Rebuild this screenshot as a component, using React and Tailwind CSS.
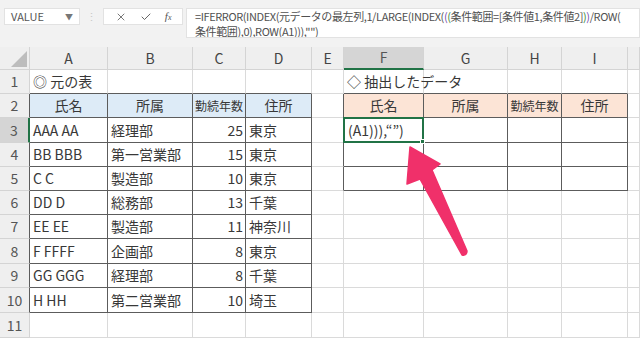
import { X, Check } from "lucide-react";

const colW = ["w-[78px]", "w-[85px]", "w-[53px]", "w-[66px]", "w-[32px]", "w-[80px]", "w-[84px]", "w-[54px]", "w-[66px]", "flex-1"];
const letters = ["A", "B", "C", "D", "E", "F", "G", "H", "I", ""];
const rowH = ["h-[24px]", "h-[24px]", "h-[25px]", "h-[24px]", "h-[24px]", "h-[24px]", "h-[24px]", "h-[25px]", "h-[24px]", "h-[25px]", "h-[25px]"];

const staff = [
  ["AAA AA", "経理部", "25", "東京"],
  ["BB BBB", "第一営業部", "15", "東京"],
  ["C C", "製造部", "10", "東京"],
  ["DD D", "総務部", "13", "千葉"],
  ["EE EE", "製造部", "11", "神奈川"],
  ["F FFFF", "企画部", "8", "東京"],
  ["GG GGG", "経理部", "8", "千葉"],
  ["H HH", "第二営業部", "10", "埼玉"],
];
const heads = ["氏名", "所属", "勤続年数", "住所"];

function cellText(r, c) {
  if (r === 1 && c === 0) return "◎ 元の表";
  if (r === 1 && c === 5) return "◇ 抽出したデータ";
  if (r === 2 && c <= 3) return heads[c];
  if (r === 2 && c >= 5 && c <= 8) return heads[c - 5];
  if (r >= 3 && r <= 10 && c <= 3) return staff[r - 3][c];
  return "";
}

function Cell({ r, c }) {
  const inLeft = r >= 2 && r <= 10 && c <= 3;
  const inRight = r >= 2 && r <= 5 && c >= 5 && c <= 8;
  const darkR = inLeft || inRight || (c === 4 && r >= 2 && r <= 5);
  const darkB = inLeft || inRight || (r === 1 && (c <= 3 || (c >= 5 && c <= 8)));
  const head = r === 2 && (inLeft || inRight);
  const text = cellText(r, c);
  const num = c === 2 && r >= 3;
  const small = head && (c === 2 || c === 7);
  const selected = r === 3 && c === 5;
  return (
    <div
      className={`relative shrink-0 ${colW[c]} border-r border-b ${darkR ? "border-r-[#5c5c5c]" : "border-r-[#dadada]"} ${darkB ? "border-b-[#5c5c5c]" : "border-b-[#dadada]"} ${head ? (inLeft ? "bg-[#ddebf7]" : "bg-[#fce4d6]") : "bg-white"} flex items-center ${head ? "justify-center" : num ? "justify-end pr-[2px]" : "pl-[3px]"} ${small ? "text-[12px]" : "text-[14px]"} whitespace-nowrap overflow-visible`}
    >
      <span className="relative z-10">{text}</span>
      {selected && (
        <div className="absolute -left-px -top-px -right-px -bottom-px border-2 border-[#217346] z-20 flex items-center pl-[3px] text-[14px] bg-white">
          <span>(A1))),“”)</span>
          <div className="absolute -right-[3px] -bottom-[3px] w-[5px] h-[5px] bg-[#217346] border border-white"></div>
        </div>
      )}
    </div>
  );
}

export default function App() {
  return (
    <div className="relative w-[640px] h-[338px] overflow-hidden bg-white text-[#383838] font-['Noto_Sans_CJK_JP',sans-serif]">
      {/* formula bar */}
      <div className="h-[47px] bg-[#f2f2f2] flex items-start pt-[8px] pl-[4px]">
        <div className="w-[76px] h-[17px] bg-white border border-[#e2e2e2] flex items-center justify-between px-[6px] text-[11px] text-[#555]">
          <span>VALUE</span>
          <span className="text-[8px] text-[#777]">▼</span>
        </div>
        <div className="w-[23px] h-[17px] flex items-center justify-center text-[11px] text-[#c8c8c8]">⋮</div>
        <div className="w-[80px] h-[17px] bg-white border border-[#e2e2e2] flex items-center justify-around px-[4px] text-[#555]">
          <X size={12} strokeWidth={1.6} />
          <Check size={12} strokeWidth={1.8} />
          <span className="italic font-['Liberation_Serif',serif] text-[11px] leading-none">f<span className="text-[8px]">x</span></span>
        </div>
        <div className="ml-[3px] flex-1 h-[30px] bg-white border border-[#e2e2e2] pl-[8px] text-[11px] leading-[15px] text-[#505050] tracking-[-0.4px] whitespace-nowrap overflow-hidden">
          <div>=IFERROR(INDEX(元データの最左列,1/LARGE(INDEX(<span className="text-[#7a4fb0]">(</span><span className="text-[#3c8a3c]">(</span>条件範囲=[条件値1,条件値2]<span className="text-[#3c8a3c]">)</span><span className="text-[#7a4fb0]">)</span>/ROW(</div>
          <div>条件範囲),0),ROW(A1))),"")</div>
        </div>
      </div>

      {/* column headers */}
      <div className="flex h-[23px] bg-[#efefef] text-[14px] text-[#444]">
        <div className="relative w-[30px] shrink-0 border-r border-b border-[#d4d4d4]">
          <svg className="absolute right-[2px] bottom-[2px]" width="16" height="16" viewBox="0 0 16 16">
            <polygon points="16,0 16,16 0,16" fill="#bdbdbd" />
          </svg>
        </div>
        {letters.map((l, c) => (
          <div
            key={c}
            className={`shrink-0 ${colW[c]} flex items-center justify-center border-r border-[#d4d4d4] ${c === 5 ? "bg-[#d5d5d5] border-b-2 border-b-[#217346] text-[#555]" : "border-b border-b-[#d4d4d4]"}`}
          >
            {l}
          </div>
        ))}
      </div>

      {/* rows */}
      {rowH.map((h, i) => {
        const r = i + 1;
        return (
          <div key={r} className={`flex ${h}`}>
            <div
              className={`w-[30px] shrink-0 flex items-center justify-center text-[14px] text-[#555] border-b border-b-[#d4d4d4] border-r ${r === 3 ? "bg-[#d5d5d5] border-r-2 border-r-[#217346]" : r >= 2 && r <= 10 ? "bg-[#efefef] border-r-[#5c5c5c]" : "bg-[#efefef] border-r-[#d4d4d4]"}`}
            >
              {r}
            </div>
            {letters.map((_, c) => (
              <Cell key={c} r={r} c={c} />
            ))}
          </div>
        );
      })}

      {/* arrow */}
      <svg className="absolute left-0 top-0 pointer-events-none z-30" width="640" height="338" viewBox="0 0 640 338">
        <path
          d="M410 147 L440 164 L432 170 L467 251 Q467 256 462 255 L420 179 L407 184 Z"
          fill="#f0306a"
          stroke="#f0306a"
          strokeWidth="1.5"
          strokeLinejoin="round"
        />
      </svg>
    </div>
  );
}
